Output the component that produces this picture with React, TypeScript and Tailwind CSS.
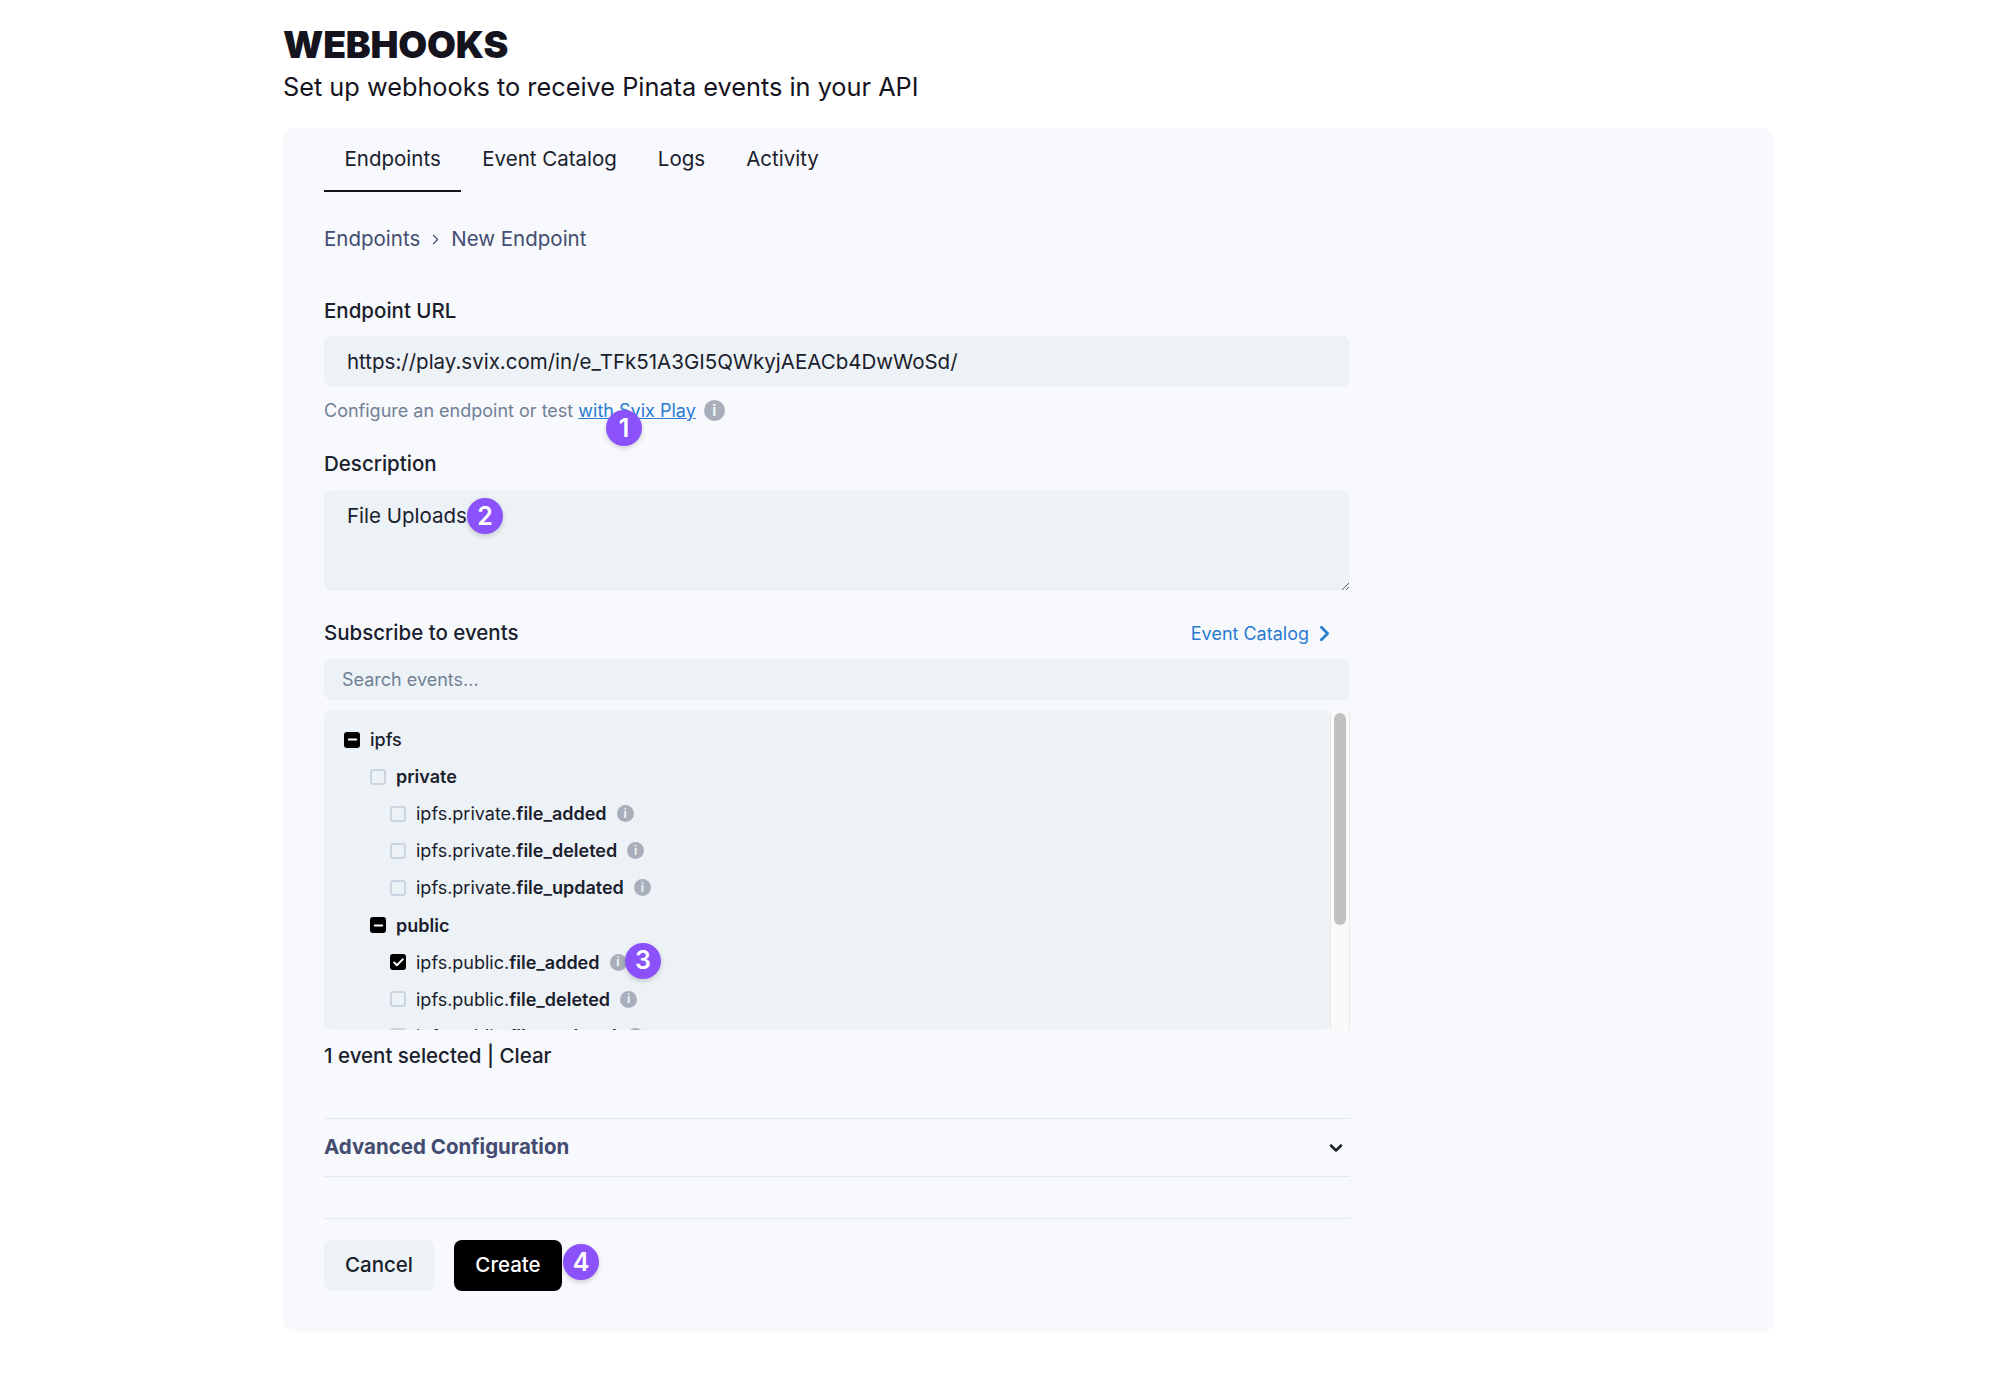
import React from "react";
import { ChevronRight, ChevronDown, Check, Minus } from "lucide-react";

function Badge({ n, className }: { n: number; className: string }) {
  return (
    <span className={`absolute z-10 flex h-[36px] w-[36px] items-center justify-center rounded-full bg-[#8b51fb] text-[25px] font-semibold leading-none text-white shadow-[0_2px_5px_rgba(0,0,0,0.18)] ${className}`}>
      {n}
    </span>
  );
}

function Info({ size = "h-[17px] w-[17px] text-[12px]" }: { size?: string }) {
  return (
    <span className={`flex shrink-0 items-center justify-center rounded-full bg-[#a8afba] font-bold leading-none text-[#edf2f7] ${size}`}>
      i
    </span>
  );
}

function Box({ state }: { state?: "minus" | "check" }) {
  if (state) {
    return (
      <span className="flex h-[16px] w-[16px] shrink-0 items-center justify-center rounded-[3px] bg-black text-white">
        {state === "minus" ? <Minus size={13} strokeWidth={3.5} /> : <Check size={13} strokeWidth={3.5} />}
      </span>
    );
  }
  return <span className="h-[16px] w-[16px] shrink-0 rounded-[3px] border-2 border-[#cbd5e0] bg-[#edf2f7]" />;
}

function Group({ label, state, indent, weight }: { label: string; state?: "minus"; indent: string; weight: string }) {
  return (
    <div className={`flex h-[37.1px] shrink-0 items-center gap-[10px] text-[18px] text-[#1a202c] ${indent} ${weight}`}>
      <Box state={state} />
      <span>{label}</span>
    </div>
  );
}

function Leaf({ prefix, name, state }: { prefix: string; name: string; state?: "check" }) {
  return (
    <div className="flex h-[37.1px] shrink-0 items-center gap-[10px] pl-[66px] text-[18px] text-[#1a202c]">
      <Box state={state} />
      <span>
        {prefix}
        <span className="font-semibold">{name}</span>
      </span>
      <Info />
    </div>
  );
}

export default function App() {
  return (
    <div className="min-h-[1383px] bg-white pl-[283px] pr-[226px] pt-[24px] font-['Inter',sans-serif] text-[#1a202c]">
      <h1 className="text-[37.3px] font-black leading-[42px] tracking-[-0.2px] text-[#14131e]">WEBHOOKS</h1>
      <p className="mt-[5px] text-[25.3px] leading-[32px] text-[#14131e]">Set up webhooks to receive Pinata events in your API</p>

      <div className="mt-[25px] h-[1204px] rounded-[12px] bg-[#f7f9fd] pl-[41px]">
        <div className="flex h-[64px] text-[20.5px] text-[#1a202c]">
          <div className="flex items-start border-b-[2px] border-[#14131e] px-[20.5px] pt-[17px] leading-[28px]">Endpoints</div>
          <div className="px-[21px] pt-[17px] leading-[28px]">Event Catalog</div>
          <div className="px-[20px] pt-[17px] leading-[28px]">Logs</div>
          <div className="px-[21px] pt-[17px] leading-[28px]">Activity</div>
        </div>

        <div className="w-[1026px]">
          <div className="mt-[33px] flex h-[28px] items-center text-[20.5px] text-[#444d72]">
            <span>Endpoints</span>
            <ChevronRight size={17} className="mx-[7px]" strokeWidth={1.6} />
            <span>New Endpoint</span>
          </div>

          <div className="mt-[44px] text-[20.5px] font-medium leading-[28px]">Endpoint URL</div>
          <input
            readOnly
            value="https://play.svix.com/in/e_TFk51A3GI5QWkyjAEACb4DwWoSd/"
            className="mt-[11px] block h-[51px] w-full rounded-[8px] bg-[#edf2f7] px-[23px] text-[20.5px] text-[#1a202c] outline-none"
          />
          <div className="relative mt-[10px] flex h-[26px] items-center text-[18px] text-[#718096]">
            <span>Configure an endpoint or test&nbsp;</span>
            <span className="text-[#2b7bd0] underline">with Svix Play</span>
            <span className="ml-[8px]"><Info size="h-[21px] w-[21px] text-[15px]" /></span>
            <Badge n={1} className="left-[282px] top-[13px]" />
          </div>

          <div className="mt-[27px] text-[20.5px] font-medium leading-[28px]">Description</div>
          <div className="relative mt-[12px]">
            <textarea
              readOnly
              defaultValue="File Uploads"
              className="block h-[101px] w-full resize-y rounded-[8px] bg-[#edf2f7] px-[23px] py-[12px] text-[20.5px] leading-[28px] text-[#1a202c] outline-none"
            />
            <Badge n={2} className="left-[143px] top-[8px]" />
          </div>

          <div className="mt-[28px] flex h-[28px] items-center justify-between text-[20.5px]">
            <span className="font-medium">Subscribe to events</span>
            <span className="mr-[13px] flex items-center text-[18px] text-[#2b7bd0]">
              Event Catalog
              <ChevronRight size={25} className="ml-[3px]" strokeWidth={2.6} />
            </span>
          </div>

          <input
            readOnly
            placeholder="Search events..."
            className="mt-[12px] block h-[41px] w-full rounded-[8px] bg-[#edf2f7] px-[18px] text-[18px] outline-none placeholder:text-[#718096]"
          />

          <div className="mt-[10px] flex h-[320px] overflow-hidden">
            <div className="relative flex min-w-0 flex-1 flex-col overflow-hidden rounded-[8px] bg-[#edf2f7] pt-[11px]">
              <Group label="ipfs" state="minus" indent="pl-[20px]" weight="font-medium" />
              <Group label="private" indent="pl-[46px]" weight="font-semibold" />
              <Leaf prefix="ipfs.private." name="file_added" />
              <Leaf prefix="ipfs.private." name="file_deleted" />
              <Leaf prefix="ipfs.private." name="file_updated" />
              <Group label="public" state="minus" indent="pl-[46px]" weight="font-semibold" />
              <div className="relative">
                <Leaf prefix="ipfs.public." name="file_added" state="check" />
                <Badge n={3} className="left-[301px] top-[-1px]" />
              </div>
              <Leaf prefix="ipfs.public." name="file_deleted" />
              <Leaf prefix="ipfs.public." name="file_updated" />
            </div>
            <div className="w-[20px] shrink-0 border-x border-[#e8e8e8] bg-[#fafafa] px-[3px] pt-[3px]">
              <div className="h-[212px] w-[12px] rounded-full bg-[#c1c1c1]" />
            </div>
          </div>

          <div className="mt-[12px] h-[28px] text-[20.5px] font-medium leading-[28px]">1 event selected | Clear</div>

          <div className="mt-[48px] flex h-[59px] items-center justify-between border-y-[1.5px] border-[#e2e8f0] pr-[4px]">
            <span className="text-[20.5px] font-bold text-[#434c70]">Advanced Configuration</span>
            <ChevronDown size={20} strokeWidth={3} className="text-[#1a202c]" />
          </div>

          <div className="mt-[41px] flex items-start gap-[20px] border-t border-[#e2e8f0] pt-[21px]">
            <button className="h-[51px] w-[110px] rounded-[8px] bg-[#edf2f7] text-[20.5px] font-medium text-[#1a202c]">Cancel</button>
            <div className="relative">
              <button className="h-[51px] w-[108px] rounded-[8px] bg-black text-[20.5px] font-medium text-white">Create</button>
              <Badge n={4} className="left-[109px] top-[4px]" />
            </div>
          </div>
        </div>
      </div>
    </div>
  );
}
